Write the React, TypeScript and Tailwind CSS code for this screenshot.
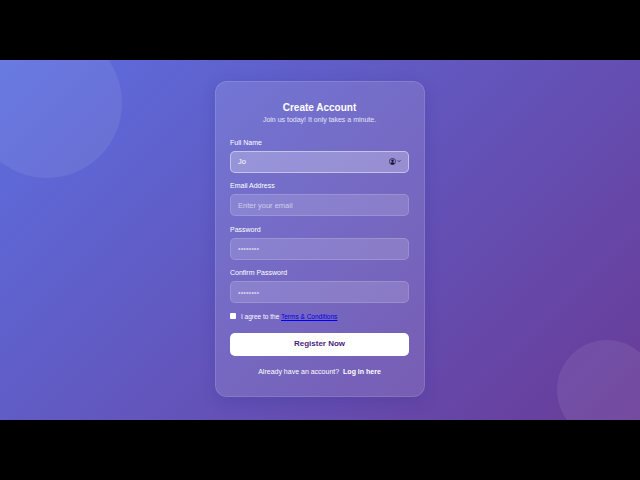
const labelClass = "mb-[3px] block text-[7px] leading-[10px] font-medium text-white";

function Field({ label, placeholder }: { label: string; placeholder: string }) {
  return (
    <div className="mb-[8.5px]">
      <label className={labelClass}>{label}</label>
      <input
        className="block h-[22px] w-full rounded-[5px] border border-white/15 bg-white/15 px-[7px] text-[7.5px] text-white outline-none placeholder:text-white/60"
        placeholder={placeholder}
        readOnly
      />
    </div>
  );
}

function AutofillIcon() {
  return (
    <span className="absolute top-[7px] right-[8px] flex items-center gap-px">
      <svg width="7" height="7" viewBox="0 0 16 16">
        <circle cx="8" cy="8" r="7" fill="none" stroke="#1b1233" strokeWidth="1.6" />
        <circle cx="8" cy="6.2" r="2.8" fill="#1b1233" />
        <path d="M3.4 12.6c.9-2.2 2.6-3.1 4.6-3.1s3.7.9 4.6 3.1A6.8 6.8 0 0 1 8 15a6.8 6.8 0 0 1-4.6-2.4z" fill="#1b1233" />
      </svg>
      <svg width="4" height="4" viewBox="0 0 10 10" fill="none" stroke="#1b1233" strokeWidth="1.8">
        <path d="M1.5 3.2 5 6.8l3.5-3.6" />
      </svg>
    </span>
  );
}

export default function App() {
  return (
    <div className="flex h-[480px] w-[640px] flex-col overflow-hidden bg-black font-['Liberation_Sans',sans-serif]">
      <div className="h-[60px] shrink-0" />
      <main className="relative flex h-[360px] shrink-0 items-center justify-center overflow-hidden bg-[linear-gradient(135deg,#5c6fe0_0%,#693b97_100%)]">
        <div className="absolute top-[-32px] left-[-28px] h-[150px] w-[150px] rounded-full bg-white/8" />
        <div className="absolute right-[-17px] bottom-[-20px] h-[100px] w-[100px] rounded-full bg-white/8" />

        <section className="relative mb-[2px] h-[316px] w-[210px] rounded-[12px] border border-white/12 bg-white/12 pt-[18.5px] pr-[15px] pl-[14px] shadow-[0_4px_16px_rgba(31,38,135,0.2)]">
          <h1 className="text-center text-[10px] leading-[13px] font-bold text-white">Create Account</h1>
          <p className="mt-[1.5px] mb-[12.75px] text-center text-[7px] leading-[10px] text-white/80">
            Join us today! It only takes a minute.
          </p>

          <div className="mb-[8.5px]">
            <label className={labelClass}>Full Name</label>
            <div className="relative">
              <input
                className="block h-[22px] w-full rounded-[5px] border border-white/45 bg-white/25 px-[7px] text-[7.5px] text-white outline-none"
                defaultValue="Jo"
              />
              <AutofillIcon />
            </div>
          </div>
          <Field label="Email Address" placeholder="Enter your email" />
          <Field label="Password" placeholder="••••••••" />
          <Field label="Confirm Password" placeholder="••••••••" />

          <div className="mt-[2px] flex items-center gap-[5px] text-[6.5px] leading-[9px] text-white">
            <input type="checkbox" className="h-[6px] w-[6px] appearance-none rounded-[1px] bg-white" />
            <span>
              I agree to the <a href="#" className="text-[#0000ee] underline">Terms &amp; Conditions</a>
            </span>
          </div>

          <button className="mt-[11.75px] block h-[23px] w-full rounded-[5px] bg-white text-[8px] font-bold text-[#4a1d7a]">
            Register Now
          </button>

          <p className="mt-[11px] text-center text-[7px] leading-[10px] text-white">
            Already have an account? <a href="#" className="ml-[2px] font-bold text-white">Log in here</a>
          </p>
        </section>
      </main>
      <div className="h-[60px] shrink-0" />
    </div>
  );
}
